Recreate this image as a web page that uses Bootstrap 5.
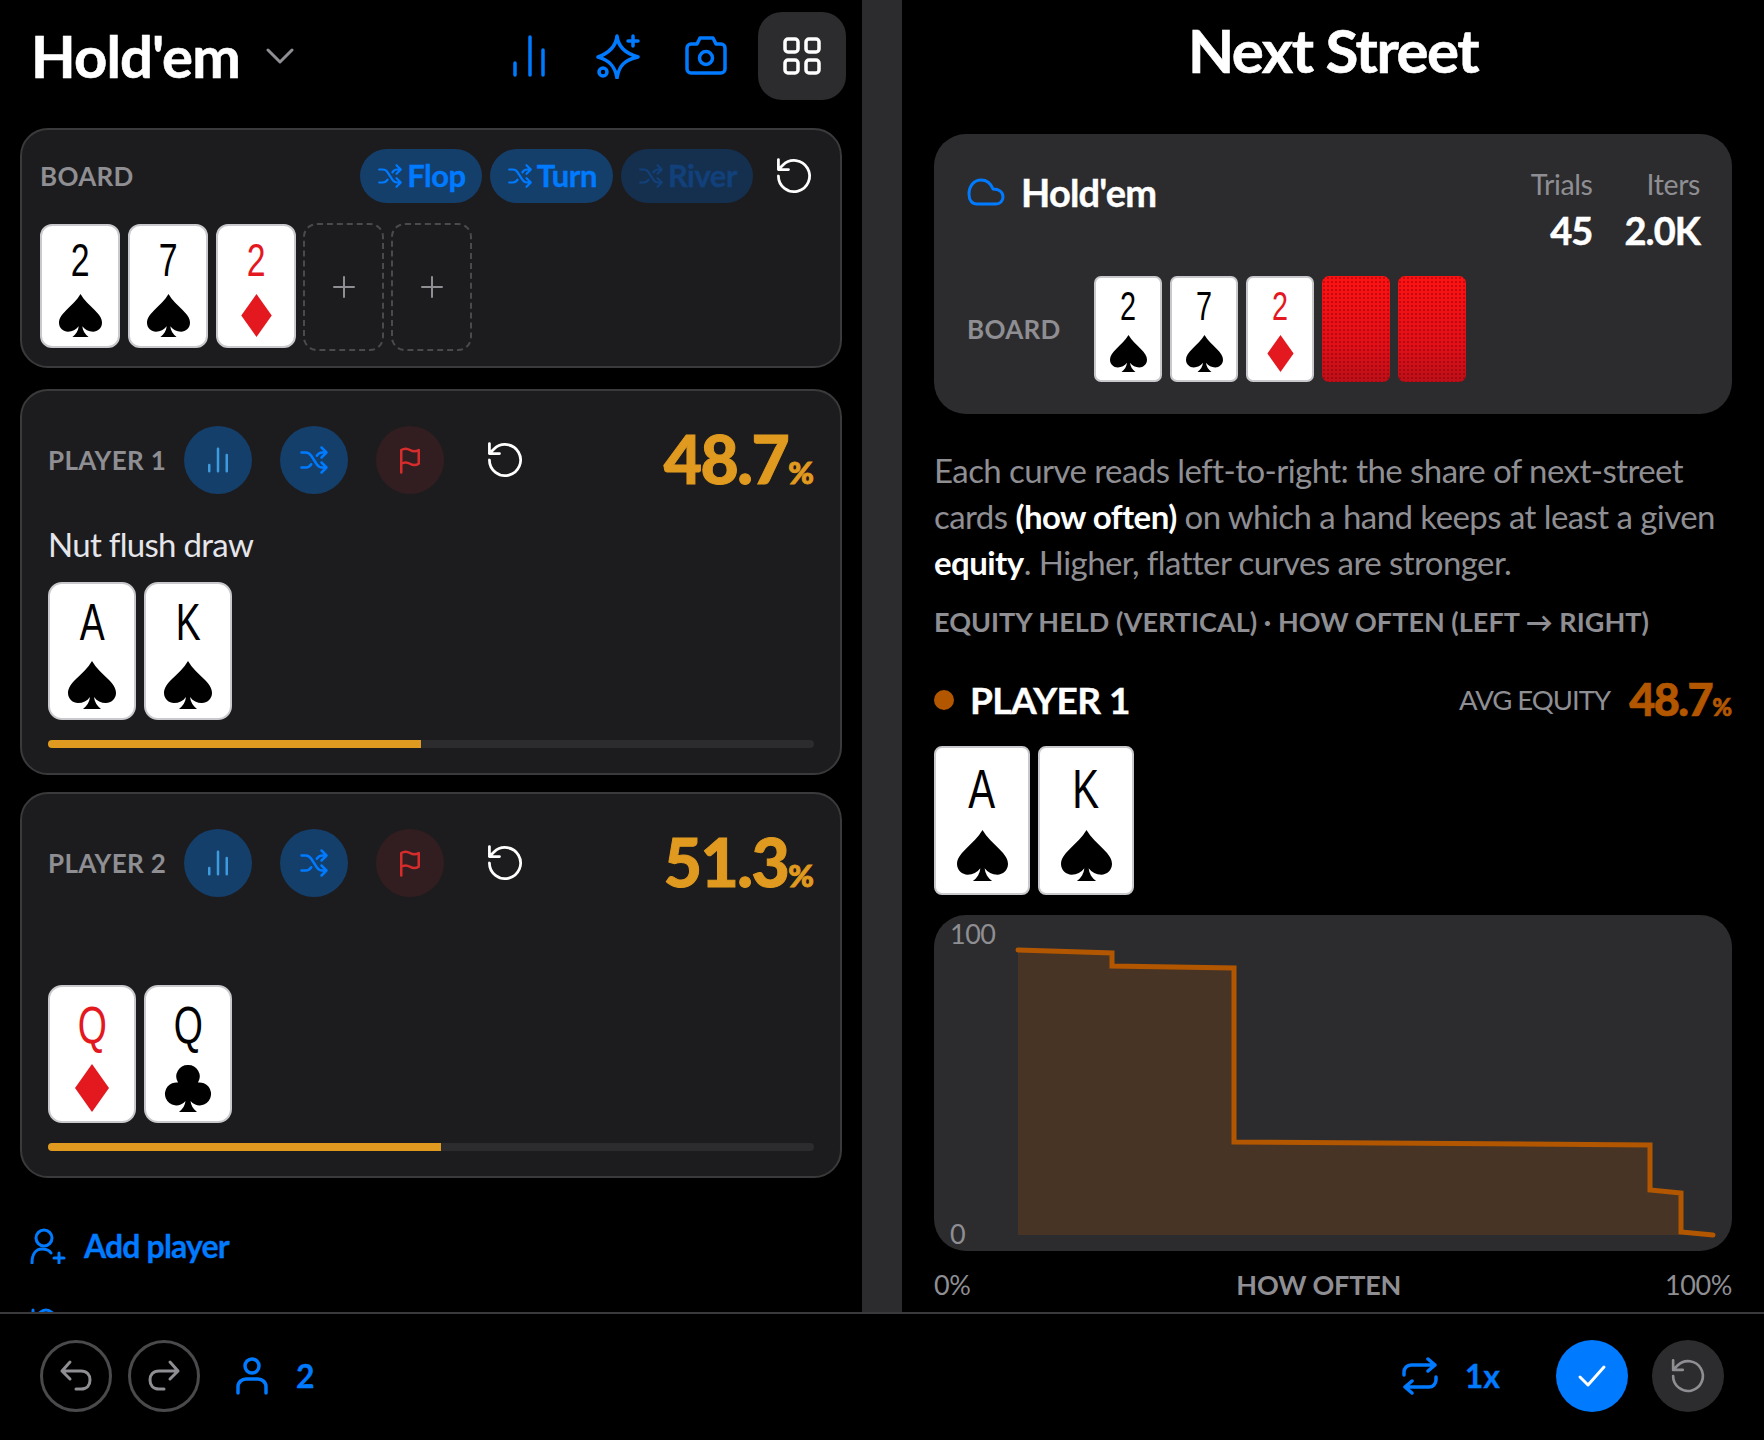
<!doctype html>
<html lang="en">
<head>
  <meta charset="utf-8">
  <meta name="viewport" content="width=device-width, initial-scale=1">
  <title>Hold'em</title>
  <link href="https://cdn.jsdelivr.net/npm/bootstrap@5.3.3/dist/css/bootstrap.min.css" rel="stylesheet">
  <style>
    html, body { height: 100%; }
    body { background: #000; color: #fff; font-family: Lato, "Noto Sans", sans-serif; overflow: hidden; }
    svg.ic { fill: none; stroke: currentColor; stroke-width: 2; stroke-linecap: round; stroke-linejoin: round; display: block; }
    .app { width: 1764px; height: 1440px; }
    .main-row { height: 1312px; overflow: hidden; }
    .pane-left { width: 862px; flex: none; overflow: hidden; }
    .pane-gap { width: 40px; flex: none; background: #2c2c2e; }
    .pane-right { width: 862px; flex: none; padding: 0 32px; }
    .top-bar { height: 128px; padding: 12px 16px 28px 31px; }
    .app-title { font-size: 58px; font-weight: 700; letter-spacing: -.85px; line-height: 88px; margin: 0; -webkit-text-stroke: .6px #fff; }
    .chev { color: #8e8e93; margin-left: 26px; }
    .tool-slot { width: 88px; height: 88px; color: #007aff; }
    .tool-grid { background: #2c2c2e; color: #fff; border-radius: 24px; margin-left: 8px; }
    .panel { background: #1c1c1e; border: 2px solid #3a3a3c; border-radius: 28px; margin: 0 20px; }
    .panel-board { height: 240px; padding: 19px 18px; margin-bottom: 21px; }
    .panel-player { height: 386px; padding: 28px 26px 0; margin-bottom: 17px; }
    .lbl { font-size: 26px; font-weight: 700; color: #8e8e93; letter-spacing: .3px; line-height: 1; }
    .pill { height: 54px; border-radius: 27px; background: #153f6b; color: #007aff; font-size: 31px; font-weight: 700; letter-spacing: -.5px; padding: 0 16px 2px 17px; gap: 4px; border: 0; -webkit-text-stroke: .4px currentColor; }
    .pill svg { margin-top: 2px; }
    .pill.dim { background: #15304f; color: #11407a; }
    .board-row { gap: 8px; margin-top: 21px; }
    .cd { background: #fff; border: 2px solid #c9c9cd; display: flex; flex-direction: column; align-items: center; justify-content: space-between; flex: none; color: #000; }
    .cd.red { color: #e3191f; }
    .cd b { font-weight: 400; font-family: "Liberation Sans", sans-serif; line-height: .72; display: block; transform: scaleX(.72); }
    .cd svg { fill: currentColor; display: block; }
    .cd-b { width: 80px; height: 124px; border-radius: 12px; padding: 17px 0 9px; }
    .cd-b b { font-size: 47px; }
    .cd-b svg { width: 43px; height: 43px; }
    .cd-p { width: 88px; height: 138px; border-radius: 14px; padding: 20px 0 9px; }
    .cd-p b { font-size: 52px; }
    .cd-p svg { width: 48px; height: 48px; }
    .cd-s { width: 68px; height: 106px; border-radius: 7px; padding: 14px 0 8px; }
    .cd-s b { font-size: 40px; }
    .cd-s svg { width: 37px; height: 37px; }
    .cd-l { width: 96px; height: 149px; border-radius: 8px; padding: 21px 0 12px; }
    .cd-l b { font-size: 56px; }
    .cd-l svg { width: 51px; height: 51px; }
    .cd-back { width: 68px; height: 106px; border-radius: 7px; flex: none;
      background: radial-gradient(circle, rgba(110,0,10,.4) 1px, transparent 1.4px) 0 0 / 4px 4px,
                  linear-gradient(#ff1212 0%, #e20f17 65%, #bd0f18 100%); }
    .cd-empty { width: 81px; height: 128px; margin: -1px 0 0 -1px; flex: none; border: 2px dashed #4a4a4c; border-radius: 14px; color: #8e8e93; }
    .round-btn { width: 68px; height: 68px; border-radius: 50%; flex: none; }
    .rb-blue { background: #153f6b; color: #007aff; }
    .rb-red { background: #321e20; color: #d62c2c; }
    .pct { font-size: 66px; font-weight: 900; color: #e09a1f; line-height: 68px; letter-spacing: -1.5px; margin-top: 6px; margin-bottom: -6px; -webkit-text-stroke: 1px #e09a1f; }
    .pct small { font-size: 31px; letter-spacing: 0; }
    .hand-name { font-size: 33px; color: #e5e5ea; letter-spacing: -.7px; line-height: 40px; height: 40px; margin-top: 24px; margin-bottom: 18px; }
    .eq-track { height: 8px; background: #2c2c2e; margin-top: 20px; border-radius: 4px; --bs-progress-bg: #2c2c2e; --bs-progress-bar-bg: #e09a1f; }
    .add-row { color: #007aff; font-size: 32px; font-weight: 700; letter-spacing: -.85px; padding: 27px 0 0 30px; gap: 18px; -webkit-text-stroke: .3px #007aff; }
    .stub-ic { color: #007aff; margin: 38px 0 0 30px; }
    .next-title { font-size: 60px; font-weight: 700; letter-spacing: -1.5px; text-align: center; height: 134px; line-height: 100px; margin: 0; -webkit-text-stroke: .6px #fff; }
    .sum-box { background: #2c2c2e; border-radius: 32px; height: 280px; padding: 0 32px 0 33px; }
    .sum-name { font-size: 38px; font-weight: 700; letter-spacing: -.8px; line-height: 44px; -webkit-text-stroke: .4px #fff; }
    .stat-lbl { font-size: 28.5px; color: #8e8e93; letter-spacing: -.4px; line-height: 32px; }
    .stat-val { font-size: 38px; font-weight: 700; letter-spacing: -.9px; line-height: 46px; margin-top: 7px; -webkit-text-stroke: .5px #fff; }
    .blurb { font-size: 33px; line-height: 46px; color: #8e8e93; letter-spacing: -.56px; margin: 33px 0 0; }
    .blurb strong { color: #fff; font-weight: 700; }
    .caption { font-size: 27px; font-weight: 700; color: #8e8e93; letter-spacing: .03px; line-height: 32px; margin-top: 21px; }
    .dot { width: 20px; height: 20px; border-radius: 50%; background: #b35600; flex: none; }
    .pl-name { font-size: 37px; font-weight: 700; letter-spacing: -.6px; -webkit-text-stroke: .4px #fff; }
    .avg-lbl { font-size: 27.5px; color: #8e8e93; letter-spacing: -1px; }
    .avg-val { font-size: 45px; font-weight: 900; color: #b35600; letter-spacing: -1.5px; -webkit-text-stroke: .7px #b35600; }
    .avg-val small { font-size: 24px; letter-spacing: 0; }
    .chart-box { background: #2c2c2e; border-radius: 32px; height: 336px; margin-top: 20px; position: relative; overflow: hidden; }
    .chart-box svg { display: block; }
    .chart-box text { font-family: Lato, sans-serif; font-size: 27px; fill: #8e8e93; letter-spacing: -.5px; }
    .axis-row { font-size: 27px; color: #8e8e93; line-height: 32px; margin-top: 18px; letter-spacing: -.4px; }
    .axis-row b { font-weight: 700; letter-spacing: -.2px; padding-left: 2px; }
    .foot-bar { height: 128px; border-top: 2px solid #3a3a3c; padding: 0 40px 2px 40px; }
    .foot-btn { width: 72px; height: 72px; border-radius: 50%; flex: none; }
    .fb-line { border: 3px solid #4a4a4c; color: #8e8e93; }
    .fb-ok { background: #007aff; color: #fff; }
    .fb-grey { background: #2c2c2e; color: #8e8e93; }
    .foot-val { color: #007aff; font-size: 32px; font-weight: 700; -webkit-text-stroke: .3px #007aff; }
  </style>
</head>
<body>
  <svg width="0" height="0" class="position-absolute">
    <defs>
      <symbol id="s-spade" viewBox="0 0 48 48"><path d="M24 0C20 7 14 12 8 18 3 23 0 27 0 32c0 6 5 10 10 10 5 0 9-2 12-6-.5 5-3 9-7 12h18c-4-3-6.500-7-7-12 3 4 7 6 12 6 5 0 10-4 10-10 0-5-3-9-8-14C34 12 28 7 24 0Z"/></symbol>
      <symbol id="s-diamond" viewBox="0 0 48 48"><path d="M24 0 41 24 24 48 7 24Z"/></symbol>
      <symbol id="s-club" viewBox="0 0 48 48"><path d="M24 1a11.500 11.500 0 0 0-10 17.500A11.500 11.500 0 1 0 21.500 37c-.5 4-2.500 8-6.500 11h18c-4-3-6-7-6.500-11A11.500 11.500 0 1 0 34 18.500 11.500 11.500 0 0 0 24 1Z"/></symbol>
      <symbol id="i-shuffle" viewBox="0 0 24 24"><path d="M2 6h3.500c2 0 3.200 1 4.300 2.600l4.400 6.800c1.100 1.600 2.300 2.600 4.300 2.600H22M2 18h3.500c2 0 3.200-1 4.300-2.600M14.200 8.600C15.300 7 16.500 6 18.500 6H22M18 2l4 4-4 4M18 14l4 4-4 4"/></symbol>
      <symbol id="i-reset" viewBox="0 0 24 24"><path d="M3.500 12A8.500 8.500 0 1 0 6 6L3.500 8.500M3.500 3v5.500H9"/></symbol>
      <symbol id="i-bars" viewBox="0 0 24 24"><path d="M5 21v-5M12 21V3M19 21V8"/></symbol>
      <symbol id="i-flag" viewBox="0 0 24 24"><path d="M5 22V4c2.500-1.500 4.500-1.500 7 0s4.500 1.500 7 0v11c-2.500 1.500-4.500 1.500-7 0s-4.500-1.500-7 0"/></symbol>
    </defs>
  </svg>

  <div class="app d-flex flex-column">
    <div class="main-row d-flex">
      <div class="pane-left">
        <div class="top-bar d-flex align-items-center">
          <h1 class="app-title">Hold'em</h1>
          <svg class="ic chev" width="28" height="16" viewBox="0 0 28 16" style="stroke-width:3"><path d="M2 2l12 12L26 2"/></svg>
          <div class="ms-auto d-flex align-items-center">
            <div class="tool-slot d-flex align-items-center justify-content-center"><svg class="ic" width="44" height="44" viewBox="0 0 44 44"><path d="M7 41V29M22 41V3M35 41V16" style="stroke-width:3.500"/></svg></div>
            <div class="tool-slot d-flex align-items-center justify-content-center"><svg class="ic" width="46" height="46" viewBox="0 0 46 46" style="stroke-width:3.500"><path d="M22 3C23 13 29 20 43 24 29 27 24 33 22 45 20 33 14 27 3 24 14 20 21 13 22 3Z"/><path d="M38 3v10M33 8h10"/><circle cx="8" cy="39" r="4"/></svg></div>
            <div class="tool-slot d-flex align-items-center justify-content-center"><svg class="ic" width="44" height="44" viewBox="0 0 44 44" style="stroke-width:3.500"><path d="M3 14a4 4 0 0 1 4-4h6l3-6h13l3 6h5a4 4 0 0 1 4 4v21a4 4 0 0 1-4 4H7a4 4 0 0 1-4-4Z"/><circle cx="22" cy="24" r="6.500"/></svg></div>
            <div class="tool-slot tool-grid d-flex align-items-center justify-content-center"><svg class="ic" width="40" height="40" viewBox="0 0 40 40" style="stroke-width:3.500"><rect x="3" y="3" width="13" height="13" rx="3"/><rect x="24" y="3" width="13" height="13" rx="3"/><rect x="3" y="24" width="13" height="13" rx="3"/><rect x="24" y="24" width="13" height="13" rx="3"/></svg></div>
          </div>
        </div>

        <div class="panel panel-board">
          <div class="d-flex align-items-center">
            <span class="lbl">BOARD</span>
            <div class="ms-auto d-flex align-items-center gap-2">
              <button class="pill d-flex align-items-center"><svg class="ic" width="26" height="26"><use href="#i-shuffle"/></svg>Flop</button>
              <button class="pill d-flex align-items-center"><svg class="ic" width="26" height="26"><use href="#i-shuffle"/></svg>Turn</button>
              <button class="pill dim d-flex align-items-center"><svg class="ic" width="26" height="26"><use href="#i-shuffle"/></svg>River</button>
            </div>
            <svg class="ic" width="44" height="44" style="stroke-width:1.500;margin:0 6px 0 19px"><use href="#i-reset"/></svg>
          </div>
          <div class="board-row d-flex">
            <div class="cd cd-b"><b>2</b><svg><use href="#s-spade"/></svg></div>
            <div class="cd cd-b"><b>7</b><svg><use href="#s-spade"/></svg></div>
            <div class="cd cd-b red"><b>2</b><svg><use href="#s-diamond"/></svg></div>
            <div class="cd-empty d-flex align-items-center justify-content-center"><svg class="ic" width="22" height="22" viewBox="0 0 22 22"><path d="M11 1v20M1 11h20"/></svg></div>
            <div class="cd-empty d-flex align-items-center justify-content-center"><svg class="ic" width="22" height="22" viewBox="0 0 22 22"><path d="M11 1v20M1 11h20"/></svg></div>
          </div>
        </div>

        <div class="panel panel-player">
          <div class="d-flex align-items-center">
            <span class="lbl" style="width:136px">PLAYER 1</span>
            <div class="round-btn rb-blue d-flex align-items-center justify-content-center" style="color:#3f9be0"><svg class="ic" width="30" height="30"><use href="#i-bars"/></svg></div>
            <div class="round-btn rb-blue d-flex align-items-center justify-content-center" style="margin-left:28px"><svg class="ic" width="30" height="30"><use href="#i-shuffle"/></svg></div>
            <div class="round-btn rb-red d-flex align-items-center justify-content-center" style="margin-left:28px"><svg class="ic" width="30" height="30"><use href="#i-flag"/></svg></div>
            <svg class="ic" width="44" height="44" style="stroke-width:1.500;margin-left:39px"><use href="#i-reset"/></svg>
            <div class="pct ms-auto">48.7<small>%</small></div>
          </div>
          <div class="hand-name">Nut flush draw</div>
          <div class="d-flex gap-2">
            <div class="cd cd-p"><b>A</b><svg><use href="#s-spade"/></svg></div>
            <div class="cd cd-p"><b>K</b><svg><use href="#s-spade"/></svg></div>
          </div>
          <div class="progress eq-track"><div class="progress-bar" style="width:48.7%"></div></div>
        </div>

        <div class="panel panel-player">
          <div class="d-flex align-items-center">
            <span class="lbl" style="width:136px">PLAYER 2</span>
            <div class="round-btn rb-blue d-flex align-items-center justify-content-center" style="color:#3f9be0"><svg class="ic" width="30" height="30"><use href="#i-bars"/></svg></div>
            <div class="round-btn rb-blue d-flex align-items-center justify-content-center" style="margin-left:28px"><svg class="ic" width="30" height="30"><use href="#i-shuffle"/></svg></div>
            <div class="round-btn rb-red d-flex align-items-center justify-content-center" style="margin-left:28px"><svg class="ic" width="30" height="30"><use href="#i-flag"/></svg></div>
            <svg class="ic" width="44" height="44" style="stroke-width:1.500;margin-left:39px"><use href="#i-reset"/></svg>
            <div class="pct ms-auto">51.3<small>%</small></div>
          </div>
          <div class="hand-name"></div>
          <div class="d-flex gap-2">
            <div class="cd cd-p red"><b>Q</b><svg><use href="#s-diamond"/></svg></div>
            <div class="cd cd-p"><b>Q</b><svg><use href="#s-club"/></svg></div>
          </div>
          <div class="progress eq-track"><div class="progress-bar" style="width:51.3%"></div></div>
        </div>

        <div class="add-row d-flex align-items-center">
          <svg class="ic" width="36" height="36" viewBox="0 0 36 36" style="stroke-width:3"><circle cx="14" cy="10" r="8"/><path d="M2 35c0-9 4-14 10-14 4 0 7 1 9 4M29 25v10M24 30h10"/></svg>
          <span>Add player</span>
        </div>
        <svg class="ic stub-ic" width="30" height="30" viewBox="0 0 30 30" style="stroke-width:3"><circle cx="16" cy="10" r="8"/><path d="M3 2v12"/></svg>
      </div>

      <div class="pane-gap"></div>

      <div class="pane-right">
        <h2 class="next-title">Next Street</h2>
        <div class="sum-box d-flex flex-column">
          <div class="d-flex justify-content-between" style="height:142px">
            <div class="d-flex align-items-center gap-3" style="height:116px">
              <svg class="ic" width="38" height="28" viewBox="0 0 38 28" style="color:#007aff;stroke-width:3"><path d="M10 26C5 26 2 22 2 16 2 8 7 2 14 2 20 2 24 6 26 11 32 11 36 14 36 19 36 23 33 26 29 26Z"/></svg>
              <span class="sum-name">Hold'em</span>
            </div>
            <div class="d-flex text-end" style="padding-top:34px;gap:32px">
              <div><div class="stat-lbl">Trials</div><div class="stat-val">45</div></div>
              <div><div class="stat-lbl">Iters</div><div class="stat-val">2.0K</div></div>
            </div>
          </div>
          <div class="d-flex align-items-center">
            <span class="lbl" style="width:127px">BOARD</span>
            <div class="d-flex gap-2">
              <div class="cd cd-s"><b>2</b><svg><use href="#s-spade"/></svg></div>
              <div class="cd cd-s"><b>7</b><svg><use href="#s-spade"/></svg></div>
              <div class="cd cd-s red"><b>2</b><svg><use href="#s-diamond"/></svg></div>
              <div class="cd-back"></div>
              <div class="cd-back"></div>
            </div>
          </div>
        </div>

        <p class="blurb">Each curve reads left-to-right: the share of next-street cards <strong>(how often)</strong> on which a hand keeps at least a given <strong>equity</strong>. Higher, flatter curves are stronger.</p>
        <div class="caption">EQUITY HELD (VERTICAL) · HOW OFTEN (LEFT → RIGHT)</div>

        <div class="d-flex align-items-center" style="margin-top:32px;height:60px">
          <span class="dot"></span>
          <span class="pl-name" style="margin-left:16px">PLAYER 1</span>
          <span class="avg-lbl ms-auto">AVG EQUITY</span>
          <span class="avg-val" style="margin-left:19px">48.7<small>%</small></span>
        </div>
        <div class="d-flex gap-2" style="margin-top:16px">
          <div class="cd cd-l"><b>A</b><svg><use href="#s-spade"/></svg></div>
          <div class="cd cd-l"><b>K</b><svg><use href="#s-spade"/></svg></div>
        </div>

        <div class="chart-box">
          <svg width="798" height="336" viewBox="934 915 798 336">
            <path d="M1018 950L1112 953V966L1234 968V1142L1650 1145V1190L1681 1193V1232L1713 1235H1018Z" fill="#b35600" fill-opacity=".2"/>
            <path d="M1018 950L1112 953V966L1234 968V1142L1650 1145V1190L1681 1193V1232L1713 1235" fill="none" stroke="#b35600" stroke-width="5" stroke-linecap="round"/>
            <text x="950" y="944">100</text>
            <text x="950" y="1244">0</text>
          </svg>
        </div>
        <div class="axis-row d-flex justify-content-between">
          <span>0%</span><b>HOW OFTEN</b><span>100%</span>
        </div>
      </div>
    </div>

    <div class="foot-bar d-flex align-items-center">
      <div class="foot-btn fb-line d-flex align-items-center justify-content-center"><svg class="ic" width="34" height="34" viewBox="0 0 34 34" style="stroke-width:3"><path d="M11 3 3 12l8 8M3 12h19c6 0 9 4 9 9s-3 9-9 9h-5"/></svg></div>
      <div class="foot-btn fb-line d-flex align-items-center justify-content-center" style="margin-left:16px"><svg class="ic" width="34" height="34" viewBox="0 0 34 34" style="stroke-width:3"><path d="M23 3l8 9-8 8M31 12H12c-6 0-9 4-9 9s3 9 9 9h5"/></svg></div>
      <svg class="ic" width="32" height="38" viewBox="0 0 32 38" style="color:#007aff;stroke-width:3.500;margin-left:36px"><circle cx="16" cy="9" r="7"/><path d="M2 36v-6c0-5 4-8 8-8h12c4 0 8 3 8 8v6"/></svg>
      <span class="foot-val" style="margin-left:28px">2</span>
      <div class="ms-auto d-flex align-items-center">
        <svg class="ic" width="38" height="38" viewBox="0 0 38 38" style="color:#007aff;stroke-width:3.500"><path d="M27 2l7 6-7 6M34 8H10a7 7 0 0 0-7 7v3M11 36l-7-6 7-6M4 30h24a7 7 0 0 0 7-7v-3"/></svg>
        <span class="foot-val" style="margin-left:26px;margin-right:56px">1x</span>
        <div class="foot-btn fb-ok d-flex align-items-center justify-content-center"><svg class="ic" width="30" height="24" viewBox="0 0 30 24" style="stroke-width:3"><path d="M3 13l8 8L27 3"/></svg></div>
        <div class="foot-btn fb-grey d-flex align-items-center justify-content-center" style="margin-left:24px"><svg class="ic" width="42" height="42" style="stroke-width:1.500"><use href="#i-reset"/></svg></div>
      </div>
    </div>
  </div>

  <script src="https://cdn.jsdelivr.net/npm/bootstrap@5.3.3/dist/js/bootstrap.bundle.min.js"></script>
</body>
</html>
